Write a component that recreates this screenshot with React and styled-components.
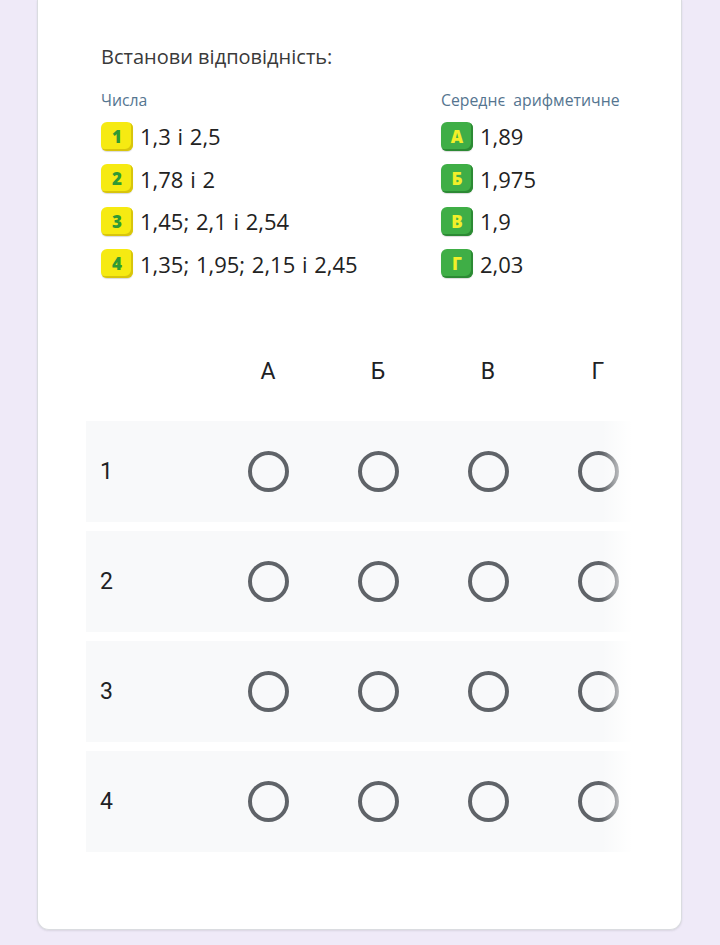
import React from "react";
import styled, { createGlobalStyle } from "styled-components";

const Global = createGlobalStyle`
  html, body { margin: 0; padding: 0; }
  body { background: #efeaf8; font-family: "Open Sans", "Liberation Sans", sans-serif; }
`;

const Page = styled.div`
  padding: 0 38px 16px 37px;
`;

const Card = styled.div`
  background: #fff;
  border: 1px solid #dadce0;
  border-top: none;
  border-radius: 0 0 12px 12px;
  box-shadow: 0 1px 2px rgba(60, 64, 67, 0.12);
  padding: 43px 0 77px 48px;
`;

const Statement = styled.div`
  padding-left: 15px;
  font-family: "Open Sans", "Liberation Sans", sans-serif;
`;

const Title = styled.div`
  font-size: 20px;
  line-height: 28px;
  color: #3a3a3a;
  margin-bottom: 18px;
`;

const Columns = styled.div`
  display: grid;
  grid-template-columns: 340px auto;
`;

const Col = styled.div`
  display: flex;
  flex-direction: column;
`;

const ColHead = styled.div`
  font-size: 15.8px;
  word-spacing: 4px;
  line-height: 22px;
  color: #557590;
  margin-bottom: 4px;
  white-space: nowrap;
`;

const Item = styled.div`
  display: flex;
  align-items: center;
  gap: 7px;
  height: 42.5px;
  font-size: 22px;
  word-spacing: 1px;
  color: #222;
  white-space: nowrap;
`;

const Badge = styled.span`
  width: 32px;
  height: 29px;
  border-radius: 6px;
  display: inline-flex;
  align-items: center;
  justify-content: center;
  font-family: "Open Sans", "Liberation Sans", sans-serif;
  font-weight: 800;
  font-size: 17px;
  word-spacing: 0;
  background: ${(p) => (p.$green ? "#3fae46" : "#f6ea12")};
  color: ${(p) => (p.$green ? "#f2ef2a" : "#2f9a34")};
  box-shadow: inset -2px -2px 0 ${(p) => (p.$green ? "#2c8a34" : "#d8c50c")},
    0 1px 1px rgba(0, 0, 0, 0.15);
`;

const TableWrap = styled.div`
  position: relative;
  width: 546px;
  overflow: hidden;
  margin-top: 45px;
`;

const Grid = styled.div`
  display: grid;
  grid-template-columns: 127px repeat(4, 110px);
  row-gap: 9px;
  width: 567px;
  font-family: Roboto, "Liberation Sans", sans-serif;
  color: #202124;
`;

const HeadCell = styled.div`
  height: 82px;
  display: flex;
  align-items: center;
  justify-content: center;
  font-size: 23px;
`;

const RowLabel = styled.div`
  height: 101px;
  background: #f8f9fa;
  display: flex;
  align-items: center;
  padding-left: 14px;
  font-size: 23px;
`;

const Cell = styled.div`
  height: 101px;
  background: #f8f9fa;
  display: flex;
  align-items: center;
  justify-content: center;
`;

const Radio = styled.span`
  width: 33px;
  height: 33px;
  border: 4px solid #5f6368;
  border-radius: 50%;
  display: block;
`;

const Fade = styled.div`
  position: absolute;
  top: 0;
  right: 0;
  bottom: 0;
  width: 30px;
  background: linear-gradient(to right, rgba(255, 255, 255, 0), #fff);
  pointer-events: none;
`;

const left = [
  ["1", "1,3 і 2,5"],
  ["2", "1,78 і 2"],
  ["3", "1,45; 2,1 і 2,54"],
  ["4", "1,35; 1,95; 2,15 і 2,45"],
];
const right = [
  ["А", "1,89"],
  ["Б", "1,975"],
  ["В", "1,9"],
  ["Г", "2,03"],
];
const letters = ["А", "Б", "В", "Г"];

export default function App() {
  return (
    <>
      <Global />
      <Page>
        <Card>
          <Statement>
            <Title>Встанови відповідність:</Title>
            <Columns>
              <Col>
                <ColHead>Числа</ColHead>
                {left.map(([k, v]) => (
                  <Item key={k}>
                    <Badge>{k}</Badge>
                    {v}
                  </Item>
                ))}
              </Col>
              <Col>
                <ColHead>Середнє арифметичне</ColHead>
                {right.map(([k, v]) => (
                  <Item key={k}>
                    <Badge $green>{k}</Badge>
                    {v}
                  </Item>
                ))}
              </Col>
            </Columns>
          </Statement>
          <TableWrap>
            <Grid>
              <HeadCell />
              {letters.map((l) => (
                <HeadCell key={l}>{l}</HeadCell>
              ))}
              {[1, 2, 3, 4].map((n) => (
                <React.Fragment key={n}>
                  <RowLabel>{n}</RowLabel>
                  {letters.map((l) => (
                    <Cell key={l}>
                      <Radio />
                    </Cell>
                  ))}
                </React.Fragment>
              ))}
            </Grid>
            <Fade />
          </TableWrap>
        </Card>
      </Page>
    </>
  );
}
